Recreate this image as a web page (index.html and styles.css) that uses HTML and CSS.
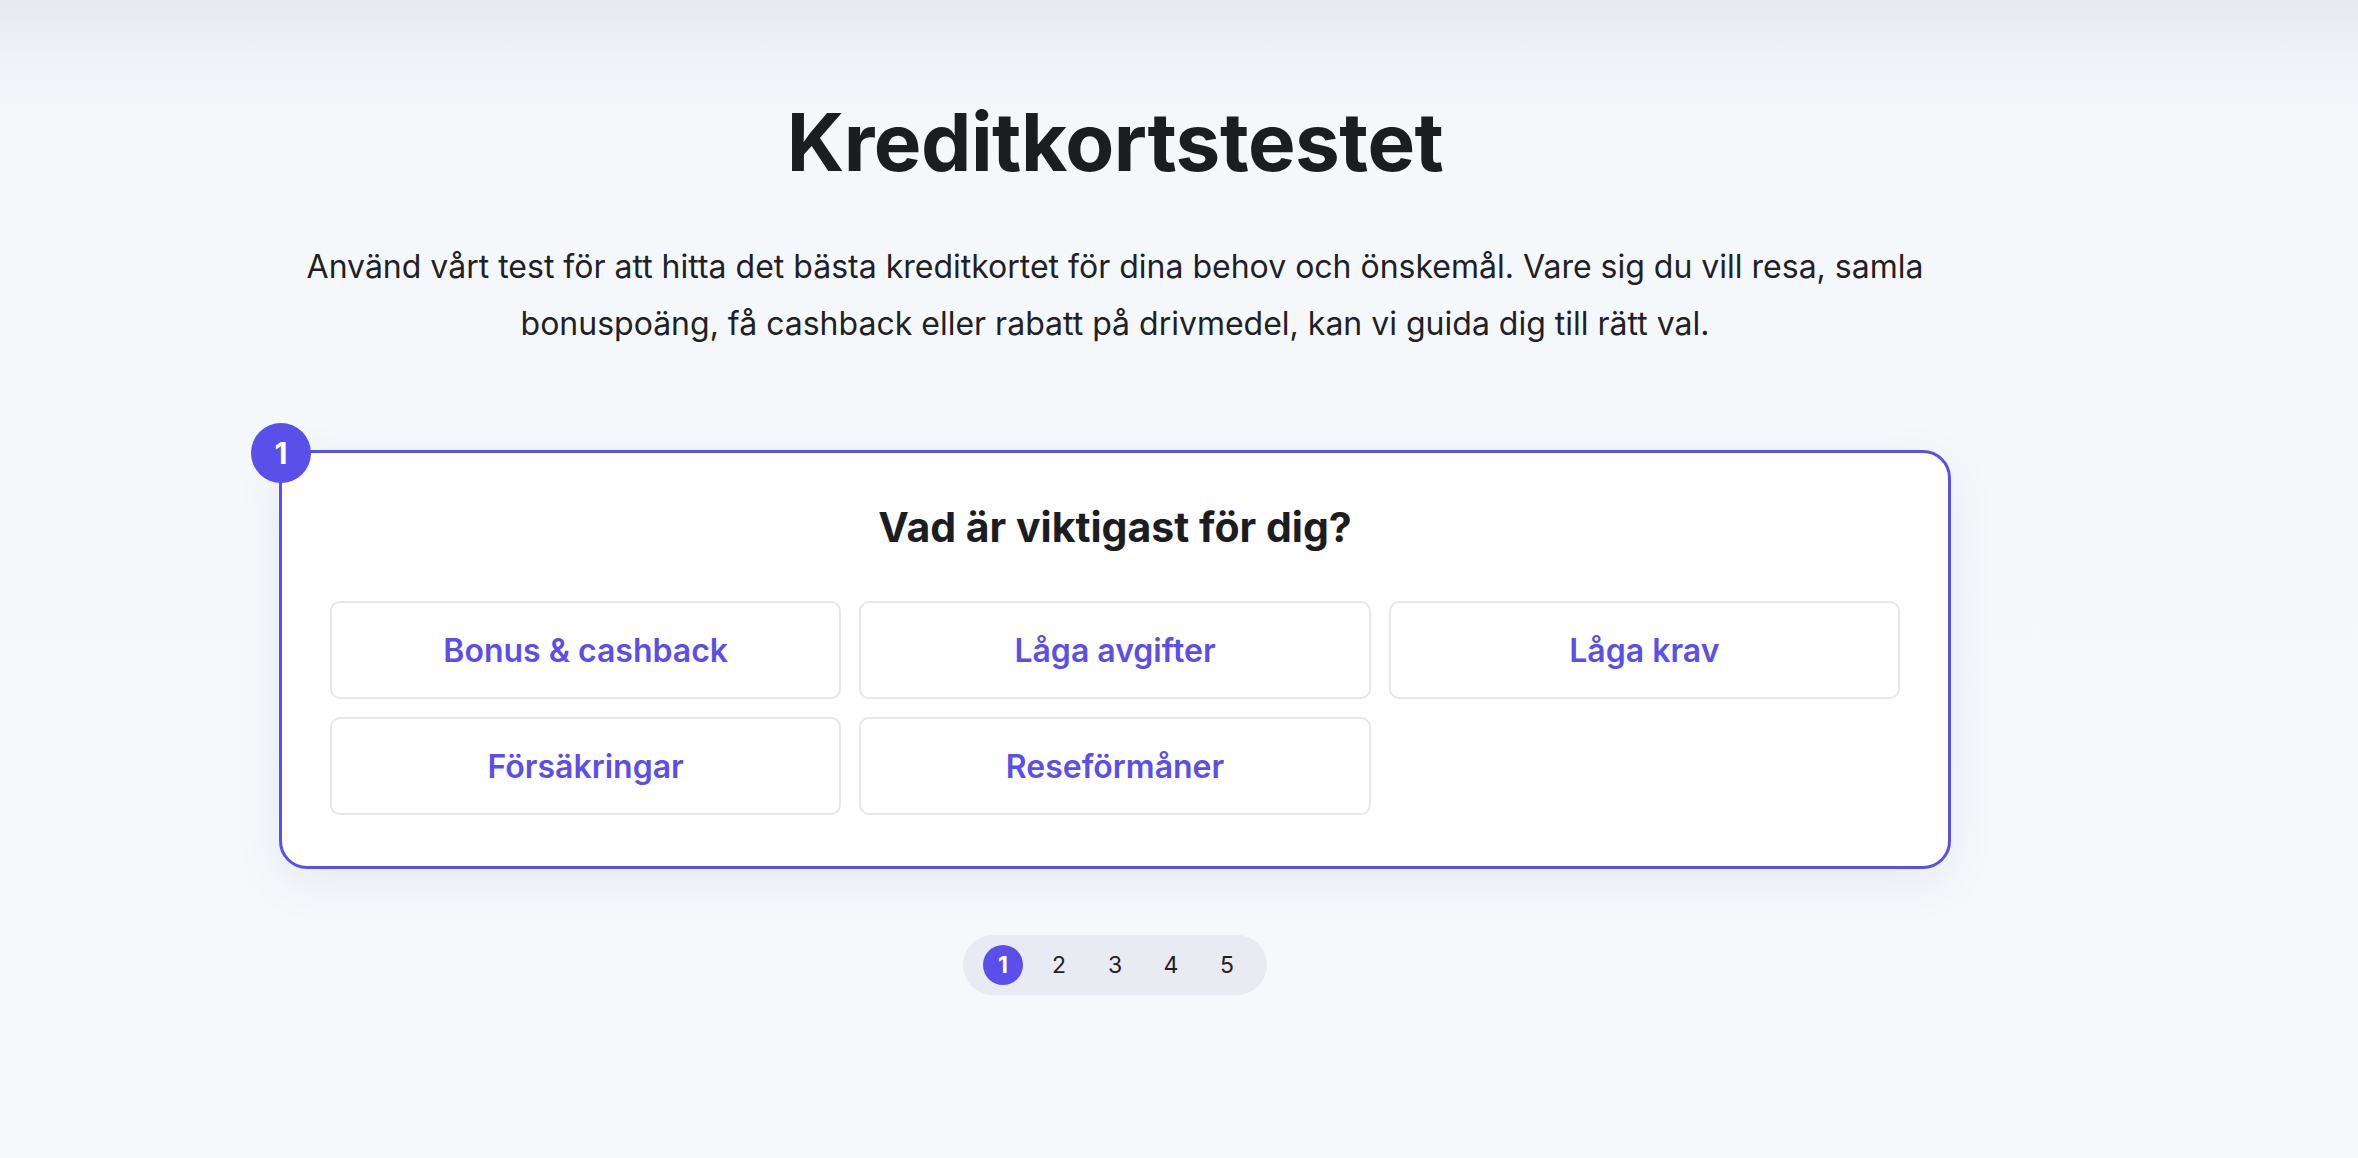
FILE: index.html
```html
<!DOCTYPE html>
<html lang="sv">
<head>
<meta charset="utf-8">
<title>Kreditkortstestet</title>
<link rel="stylesheet" href="styles.css">
</head>
<body>
<main class="page">
  <h1 class="title">Kreditkortstestet</h1>
  <p class="intro">Använd vårt test för att hitta det bästa kreditkortet för dina behov och önskemål. Vare sig du vill resa, samla bonuspoäng, få cashback eller rabatt på drivmedel, kan vi guida dig till rätt val.</p>

  <section class="card">
    <span class="badge">1</span>
    <h2 class="question">Vad är viktigast för dig?</h2>
    <div class="options">
      <button class="option">Bonus &amp; cashback</button>
      <button class="option">Låga avgifter</button>
      <button class="option">Låga krav</button>
      <button class="option">Försäkringar</button>
      <button class="option">Reseförmåner</button>
    </div>
  </section>

  <nav class="pager-wrap">
    <div class="pager">
      <span class="step active">1</span>
      <span class="step">2</span>
      <span class="step">3</span>
      <span class="step">4</span>
      <span class="step">5</span>
    </div>
  </nav>
</main>
</body>
</html>
```

FILE: styles.css
```css
* { box-sizing: border-box; }

html, body {
  margin: 0;
  padding: 0;
}

body {
  min-height: 1158px;
  font-family: Inter, "Noto Sans", "Liberation Sans", sans-serif;
  color: #1e1f23;
  background: linear-gradient(to bottom, #e7e9ee 0px, #f1f4f8 70px, #f5f8fb 140px, #f6f9fc 100%);
}

.page {
  width: 1672px;
  margin-left: 279px;
  padding-top: 94px;
}

.title {
  margin: 0 0 48px;
  font-size: 80px;
  line-height: 96px;
  font-weight: 700;
  letter-spacing: -0.5px;
  text-align: center;
  color: #1c1d21;
}

.intro {
  margin: 0;
  font-size: 32px;
  line-height: 57px;
  font-weight: 400;
  text-align: center;
  color: #1f2127;
}

.card {
  position: relative;
  margin-top: 98px;
  background: #ffffff;
  border: 3px solid #5a4fe8;
  border-radius: 28px;
  padding: 48px 48px 51px;
  box-shadow: 0 14px 50px rgba(30, 41, 80, 0.07);
}

.badge {
  position: absolute;
  left: -31px;
  top: -30px;
  width: 60px;
  height: 60px;
  border-radius: 50%;
  background: #5a4fe8;
  color: #ffffff;
  font-size: 30px;
  font-weight: 700;
  display: flex;
  align-items: center;
  justify-content: center;
}

.question {
  margin: 0 0 47px;
  font-size: 41px;
  line-height: 53px;
  font-weight: 700;
  text-align: center;
  color: #1c1d21;
}

.options {
  display: grid;
  grid-template-columns: repeat(3, 1fr);
  gap: 18px;
}

.option {
  height: 98px;
  background: #ffffff;
  border: 2px solid #e6e7ea;
  border-radius: 10px;
  font-family: inherit;
  font-size: 32px;
  font-weight: 600;
  color: #5a4fe8;
  cursor: pointer;
}

.pager-wrap {
  display: flex;
  justify-content: center;
  margin-top: 66px;
}

.pager {
  display: flex;
  gap: 16px;
  padding: 10px 20px;
  background: #e8ebf1;
  border-radius: 30px;
}

.step {
  width: 40px;
  height: 40px;
  border-radius: 50%;
  display: flex;
  align-items: center;
  justify-content: center;
  font-size: 23px;
  color: #1f2127;
}

.step.active {
  background: #5a4fe8;
  color: #ffffff;
  font-weight: 700;
}
```
